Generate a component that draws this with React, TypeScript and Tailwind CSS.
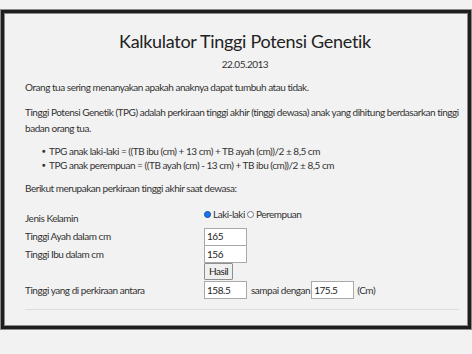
import React from "react";

function Radio({ checked }: { checked?: boolean }) {
  return checked ? (
    <span className="inline-block w-[7px] h-[7px] rounded-full bg-[#1a73e8] border border-[#0b4fb3]" />
  ) : (
    <span className="inline-block w-[7px] h-[7px] rounded-full bg-white border border-[#777]" />
  );
}

function Field({ value, w = "w-[43px]" }: { value: string; w?: string }) {
  return (
    <div
      className={`${w} h-[18px] bg-white border border-[#a9a9a9] flex items-center pl-[2px] text-[10px] text-[#222]`}
    >
      {value}
    </div>
  );
}

export default function App() {
  return (
    <div
      className="w-[472px] h-[354px] bg-[#f2f2f2] text-[#333] pt-[9px]"
      style={{ fontFamily: "Lato, 'Noto Sans', sans-serif" }}
    >
      <div className="border border-[#8a8a8a]">
        <div className="border-[3px] border-[#1e1e1e]">
          <div className="border border-[#8a8a8a]">
            <div className="bg-[#f2f2f2] pl-[20px] pr-[2px] pt-[14px] pb-[15px] text-[10px] tracking-[-0.47px]">
              <div className="text-center text-[18px] leading-[26px] text-[#222] tracking-[-0.3px]">
                Kalkulator Tinggi Potensi Genetik
              </div>
              <div className="text-center leading-[14px] mt-[3px]">22.05.2013</div>
              <p className="leading-[16px] mt-[8px]">
                Orang tua sering menanyakan apakah anaknya dapat tumbuh atau tidak.
              </p>
              <p className="leading-[16px] mt-[9px]">
                Tinggi Potensi Genetik (TPG) adalah perkiraan tinggi akhir (tinggi dewasa) anak yang dihitung berdasarkan tinggi
                badan orang tua.
              </p>
              <ul className="mt-[8px] pl-[17px] leading-[14px]">
                <li className="flex items-center mt-[1px]">
                  <span className="w-[7px] text-[6px]">●</span>
                  TPG anak laki-laki = ((TB ibu (cm) + 13 cm) + TB ayah (cm))/2 ± 8,5 cm
                </li>
                <li className="flex items-center">
                  <span className="w-[7px] text-[6px]">●</span>
                  TPG anak perempuan = ((TB ayah (cm) - 13 cm) + TB ibu (cm))/2 ± 8,5 cm
                </li>
              </ul>
              <p className="leading-[16px] mt-[8px]">Berikut merupakan perkiraan tinggi akhir saat dewasa:</p>

              <div className="mt-[11px]">
                <div className="flex h-[21px]">
                  <div className="w-[179px] pt-[4px] leading-[14px]">Jenis Kelamin</div>
                  <div className="flex items-center gap-[2px] h-[14px] leading-[14px]">
                    <Radio checked />
                    <span>Laki-laki</span>
                    <Radio />
                    <span>Perempuan</span>
                  </div>
                </div>
                <div className="flex items-center h-[17px]">
                  <div className="w-[179px]">Tinggi Ayah dalam cm</div>
                  <Field value="165" />
                </div>
                <div className="flex items-center h-[18px]">
                  <div className="w-[179px]">Tinggi Ibu dalam cm</div>
                  <Field value="156" />
                </div>
                <div className="flex h-[18px]">
                  <div className="w-[179px]" />
                  <div className="h-[17px] px-[4px] bg-[#efefef] border border-[#8f8f8f] rounded-[1px] flex items-center text-[10px] text-[#222]">
                    Hasil
                  </div>
                </div>
                <div className="flex items-center h-[18px]">
                  <div className="w-[179px]">Tinggi yang di perkiraan antara</div>
                  <Field value="158.5" />
                  <span className="ml-[4px] mr-[1px]">sampai dengan</span>
                  <Field value="175.5" />
                  <span className="ml-[3px]">(Cm)</span>
                </div>
              </div>
              <div className="mt-[10px] mr-[6px] border-t border-[#dcdcdc]" />
            </div>
          </div>
        </div>
      </div>
    </div>
  );
}
